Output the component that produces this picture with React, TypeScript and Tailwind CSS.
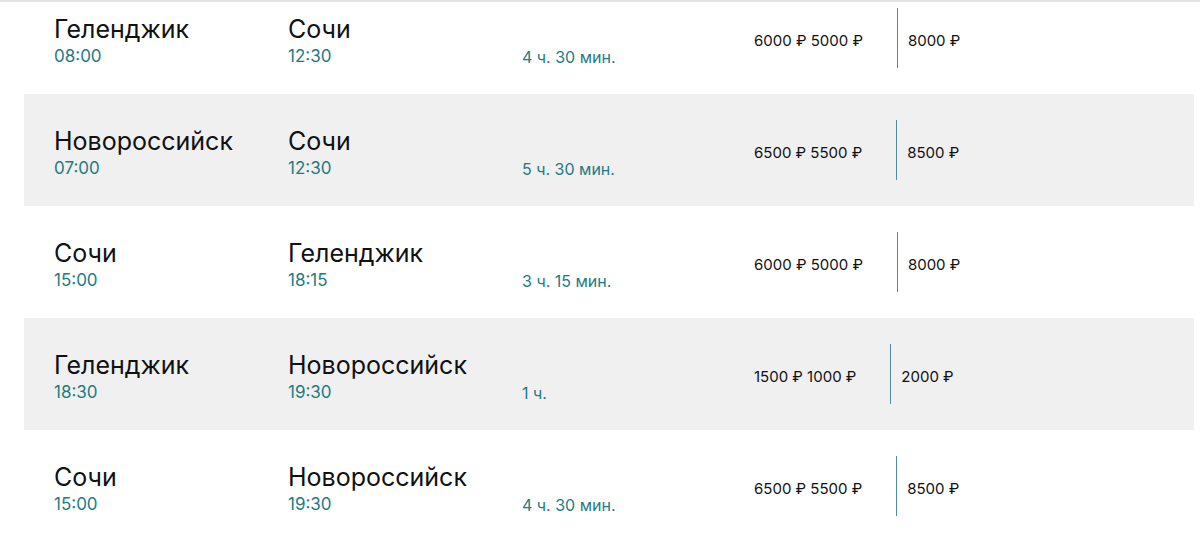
const trips = [
  { from: 'Геленджик', dep: '08:00', to: 'Сочи', arr: '12:30', dur: '4 ч. 30 мин.', old: '6000 ₽', price: '5000 ₽', full: '8000 ₽' },
  { from: 'Новороссийск', dep: '07:00', to: 'Сочи', arr: '12:30', dur: '5 ч. 30 мин.', old: '6500 ₽', price: '5500 ₽', full: '8500 ₽' },
  { from: 'Сочи', dep: '15:00', to: 'Геленджик', arr: '18:15', dur: '3 ч. 15 мин.', old: '6000 ₽', price: '5000 ₽', full: '8000 ₽' },
  { from: 'Геленджик', dep: '18:30', to: 'Новороссийск', arr: '19:30', dur: '1 ч.', old: '1500 ₽', price: '1000 ₽', full: '2000 ₽' },
  { from: 'Сочи', dep: '15:00', to: 'Новороссийск', arr: '19:30', dur: '4 ч. 30 мин.', old: '6500 ₽', price: '5500 ₽', full: '8500 ₽' },
]

function Point({ city, time }: { city: string; time: string }) {
  return (
    <div className="w-[234px] shrink-0 flex flex-col">
      <span className="text-[25px] leading-[30px] text-[#111]">{city}</span>
      <span className="mt-[1px] text-[17px] leading-[22px] text-[#1d7b83]">{time}</span>
    </div>
  )
}

export default function App() {
  return (
    <div className="h-[545px] overflow-hidden bg-white border-t-2 border-[#e2e2e2]" style={{ fontFamily: 'Inter, "Noto Sans", sans-serif' }}>
      <div className="-mt-[20px] pl-[24px] pr-[6px]">
        {trips.map((t, i) => (
          <div
            key={i}
            className={`h-[112px] flex items-center pl-[30px] ${i % 2 === 1 ? 'bg-[#f0f0f0]' : 'bg-white'}`}
          >
            <div className="flex pt-[6px]">
              <Point city={t.from} time={t.dep} />
              <Point city={t.to} time={t.arr} />
              <div className="w-[232px] shrink-0 pt-[32px] text-[16px] leading-[22px] text-[#1d7b83]">{t.dur}</div>
            </div>
            <div className="flex items-center text-[15px] text-[#111]">
              <span className="pr-[34px] pt-[6px]">{t.old} {t.price}</span>
              <div className="h-[60px] w-px bg-[#4f8c9c]" />
              <span className="pl-[10px] pt-[6px]">{t.full}</span>
            </div>
          </div>
        ))}
      </div>
    </div>
  )
}
